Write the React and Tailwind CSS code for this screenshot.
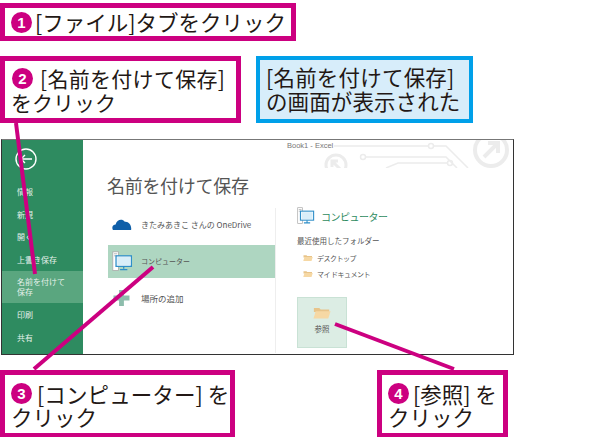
import React from 'react';

const JP = "font-['Noto_Sans_CJK_JP','Liberation_Sans',sans-serif]";

// 丸数字バッジ
const Num = ({ n, className = '' }) => (
  <span className={`inline-flex items-center justify-center w-[21px] h-[21px] rounded-full bg-[#cc0080] text-white text-[15px] font-bold leading-none align-[1px] font-['Liberation_Sans',sans-serif] ${className}`}>
    {n}
  </span>
);

const SideItem = ({ children, active, tall }) => (
  <div className={`flex items-center pl-[15px] text-[8px] leading-[10px] text-[#e4f1ea] ${active ? 'h-[32px] bg-[#5aa67f]' : tall ? 'h-[23px]' : 'h-[22.5px]'}`}>
    <div>{children}</div>
  </div>
);

const FolderIcon = ({ className }) => (
  <svg viewBox="0 0 20 14" className={className}>
    <path d="M1 3 L1 1.5 L7 1.5 L8.5 3 L18 3 L18 6 L1 6 Z" fill="#e8c48a" />
    <path d="M0.5 13 L3 5 L19.5 5 L17 13 Z" fill="#f6d8a4" />
  </svg>
);

const ComputerIcon = ({ className }) => (
  <svg viewBox="0 0 26 26" className={className}>
    <rect x="1" y="1" width="7" height="23" fill="#fff" stroke="#a9a9a9" />
    <rect x="2.5" y="3" width="4" height="1" fill="#a9a9a9" />
    <rect x="2.5" y="5.5" width="4" height="1" fill="#a9a9a9" />
    <rect x="5" y="6" width="19" height="13" fill="#fff" stroke="#2f8fc9" strokeWidth="1.6" />
    <rect x="6.5" y="7.5" width="16" height="10" fill="#d9eef9" />
    <path d="M14.5 19 V22 M10 23 H19" stroke="#2f8fc9" strokeWidth="1.6" />
  </svg>
);

const App = () => {
  return (
    <div className={`relative w-[600px] h-[437px] bg-white overflow-hidden text-[#231815] ${JP}`}>
      <div className="pt-[3px] flex flex-col">
        {/* 手順1 */}
        <div className="w-[296px] h-[38px] border-[5px] border-[#cc0080] flex items-center pl-[6px] text-[21.5px] leading-none whitespace-nowrap">
          <Num n="1" className="mr-[3px]" />
          <span>[ファイル]タブをクリック</span>
        </div>

        {/* 手順2と画面の説明 */}
        <div className="flex mt-[15px] h-[67px]">
          <div className="w-[241px] border-[5px] border-[#cc0080] pl-[6px] pt-[5px] text-[21px] leading-[24px] whitespace-nowrap">
            <div className="flex items-center">
              <Num n="2" className="ml-[1px] mr-[7px]" />
              <span className="tracking-[0.3px]">[名前を付けて保存]</span>
            </div>
            <div>をクリック</div>
          </div>
          <div className="w-[217px] ml-[15px] border-[4px] border-[#00a0e9] bg-[#d7edfa] pl-[6px] pt-[5px] text-[21.5px] leading-[24px] whitespace-nowrap">
            <div className="tracking-[0.2px]">[名前を付けて保存]</div>
            <div className="tracking-[0.1px]">の画面が表示された</div>
          </div>
        </div>

        {/* Excelの画面 */}
        <div className="flex w-[513px] h-[216px] ml-[1px] mt-[16px] border border-[#333] border-t-[#777] text-[#555]">
          <div className="w-[81px] bg-[#2e8b60] shrink-0">
            <div className="pt-[8px] pl-[13px]">
              <svg viewBox="0 0 22 22" className="w-[22px] h-[22px]">
                <circle cx="11" cy="11" r="10" fill="none" stroke="#fff" strokeWidth="1.4" />
                <path d="M17 11 H6 M10 7 L6 11 L10 15" fill="none" stroke="#fff" strokeWidth="1.4" />
              </svg>
            </div>
            <div className="mt-[11px]">
              <SideItem>情報</SideItem>
              <SideItem>新規</SideItem>
              <SideItem>開く</SideItem>
              <SideItem>上書き保存</SideItem>
              <SideItem active>名前を付けて<br />保存</SideItem>
              <SideItem tall>印刷</SideItem>
              <SideItem tall>共有</SideItem>
            </div>
          </div>

          <div className="relative flex-1 flex">
            <span className="absolute left-[204px] top-[1px] text-[7.5px] leading-[10px] text-[#777] font-['Liberation_Sans',sans-serif]">Book1 - Excel</span>
            {/* 背景の回路模様 */}
            <svg viewBox="0 0 220 28" className="absolute right-0 top-0 w-[220px] h-[28px]" fill="none" stroke="#ececec" strokeWidth="1.5">
              <path d="M41 6 H135 M141 6 H153 L175 28 M73 17 H153 L164 28 M93 28 L105 23 H154" />
              <circle cx="138" cy="6" r="2.5" />
              <circle cx="70" cy="17" r="2.5" />
              <circle cx="157" cy="23" r="2.5" />
              <circle cx="43" cy="25" r="10" strokeWidth="3" />
              <path d="M48 30 L39 21 M39 27 V21 H45" strokeWidth="3" />
              <circle cx="198" cy="10" r="16" strokeWidth="4" />
              <path d="M191 17 L205 3 M195 3 H205 V13" strokeWidth="4" />
            </svg>

            <div className="w-[192px] shrink-0">
              <div className="pl-[24px] pt-[31px] text-[18px] leading-[28px] text-[#555] tracking-[-0.3px] whitespace-nowrap">名前を付けて保存</div>
              <div className="mt-[7px] h-[37px] flex items-center pl-[29px] text-[8px]">
                <svg viewBox="0 0 22 14" className="w-[20px] h-[13px] mr-[9px]">
                  <path d="M1 13 C-1 9 2 7 4 7 C5 2 11 0 14 4 C18 3 22 8 21 13 Z" fill="#0f5fa8" />
                </svg>
                <span className="whitespace-nowrap">きたみあきこ さんの OneDrive</span>
              </div>
              <div className="h-[33px] mt-[2px] ml-[25px] bg-[#aed6c1] flex items-center pl-[4px] text-[7px]">
                <ComputerIcon className="w-[21px] h-[21px] mr-[8px]" />
                <span>コンピューター</span>
              </div>
              <div className="h-[40px] flex items-center pl-[30px] text-[8.5px]">
                <svg viewBox="0 0 20 20" className="w-[17px] h-[16px] mr-[11px]">
                  <path d="M7 0 H13 V7 H20 V13 H13 V20 H7 V13 H0 V7 H7 Z" fill="#8dbdac" />
                </svg>
                <span>場所の追加</span>
              </div>
            </div>

            <div className="w-px h-[145px] mt-[68px] bg-[#eeeeee]" />

            <div className="pl-[21px] pt-[68px] text-[7px] text-[#555]">
              <div className="flex items-center h-[16px]">
                <ComputerIcon className="w-[18px] h-[18px] mr-[6px]" />
                <span className="text-[10px] tracking-[-0.5px] text-[#2e8b60] whitespace-nowrap">コンピューター</span>
              </div>
              <div className="mt-[12px] text-[7.5px] leading-[10px] whitespace-nowrap">最近使用したフォルダー</div>
              <div className="flex items-center h-[10px] mt-[7px] pl-[6px] tracking-[-0.5px]">
                <FolderIcon className="w-[10px] h-[8px] mr-[4px]" />
                <span>デスクトップ</span>
              </div>
              <div className="flex items-center h-[10px] mt-[6px] pl-[6px] tracking-[-0.5px]">
                <FolderIcon className="w-[10px] h-[8px] mr-[4px]" />
                <span className="whitespace-nowrap">マイ ドキュメント</span>
              </div>
              <div className="w-[50px] h-[51px] mt-[18px] bg-[#dcede4] border border-[#c9e2d5] flex flex-col items-center pt-[8px]">
                <FolderIcon className="w-[18px] h-[14px]" />
                <span className="mt-[4px] text-[7.5px] leading-[10px]">参照</span>
              </div>
            </div>
          </div>
        </div>

        {/* 手順3と4 */}
        <div className="flex mt-[15px] h-[68px]">
          <div className="w-[235px] border-[5px] border-[#cc0080] pl-[6px] pt-[7px] text-[21.5px] leading-[23px] whitespace-nowrap">
            <div className="flex items-center">
              <Num n="3" className="mr-[5px]" />
              <span className="tracking-[0.1px]">[コンピューター] を</span>
            </div>
            <div>クリック</div>
          </div>
          <div className="w-[131px] ml-[142px] border-[5px] border-[#cc0080] pl-[6px] pt-[7px] text-[21.5px] leading-[23px] whitespace-nowrap">
            <div className="flex items-center">
              <Num n="4" className="mr-[4px]" />
              <span>[参照] を</span>
            </div>
            <div>クリック</div>
          </div>
        </div>
      </div>

      {/* 引き出し線 */}
      <svg viewBox="0 0 600 437" className="absolute inset-0 w-[600px] h-[437px] pointer-events-none" stroke="#cc0080" strokeWidth="4" fill="none">
        <path d="M16 123 L35 274" />
        <path d="M34 369 L153 267" />
        <path d="M335 324 L454 369" />
      </svg>
    </div>
  );
};

export default App;
